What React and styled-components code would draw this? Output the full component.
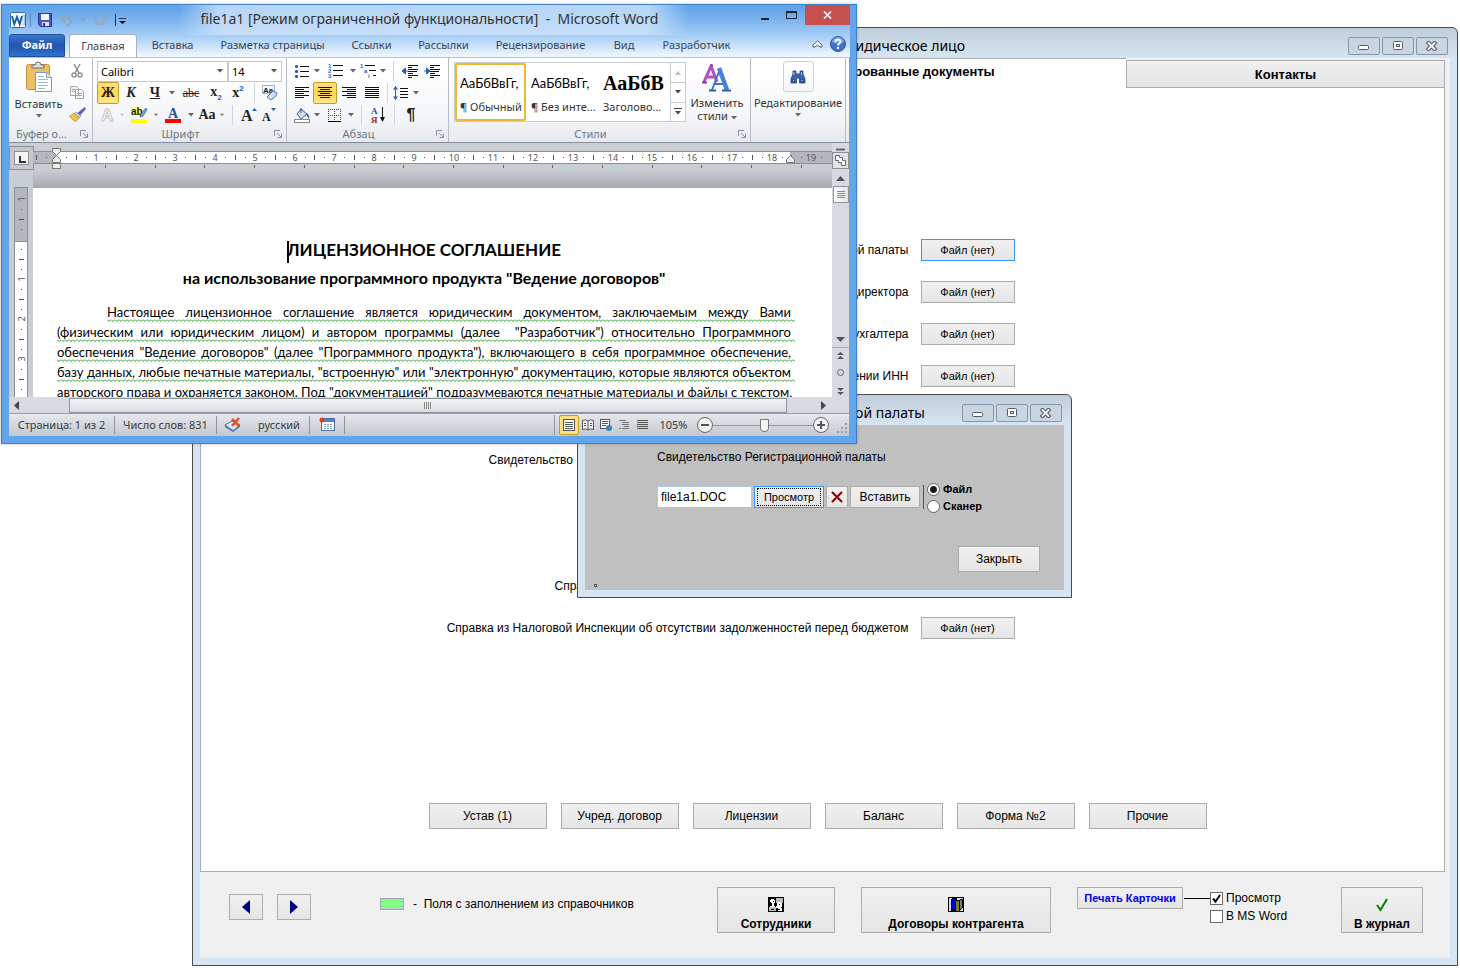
import React, { useState } from "react";
import styled, { createGlobalStyle, css } from "styled-components";

const SANS = `"Liberation Sans", Arial, sans-serif`;
const UI = `"Noto Sans", "Open Sans", sans-serif`;
const SERIF = `"Liberation Serif", "Times New Roman", serif`;
const DOC = `Lato, "Open Sans", sans-serif`;

const GlobalStyle = createGlobalStyle`
  * { box-sizing: border-box; }
  body { margin: 0; background: #fff; color: #000; font: 12px ${SANS}; }
  button, input, select { margin: 0; font: inherit; color: inherit; }
`;

/* ---------- desktop and MDI windows ---------- */

const Desktop = styled.div`
  position: relative;
  min-height: 100vh;
  overflow: hidden;
`;

const MdiWindow = styled.section`
  position: absolute;
  display: flex;
  flex-direction: column;
  padding: 0 7px 7px;
  border: 1px solid #4a4a4a;
  border-radius: 0 6px 0 0;
  background: linear-gradient(#c0cdda, #d7e4f2 30px);
`;

const MainFrame = styled(MdiWindow)`
  left: 192px;
  top: 27px;
  right: 2px;
  bottom: 3px;
`;

const DialogFrame = styled(MdiWindow)`
  left: 577px;
  top: 394px;
  width: 495px;
  height: 204px;
  border-radius: 6px 6px 0 0;
`;

const MdiTitle = styled.header`
  display: grid;
  grid-template-columns: ${(p) => p.$text}px 1fr;
  align-items: center;
  height: 30px;
  flex: none;
  padding-top: 5px;
  font: 14px ${UI};
  white-space: nowrap;

  h2 {
    margin: 0;
    font: inherit;
    text-align: right;
  }
`;

const MdiControls = styled.div`
  display: flex;
  justify-content: flex-end;
  gap: 2px;
  padding-right: 2px;
`;

const MdiButton = styled.button`
  display: flex;
  align-items: center;
  justify-content: center;
  width: 32px;
  height: 18px;
  padding: 0;
  border: 1px solid #8796aa;
  border-radius: 2px;
  background: #c8d5e3;
`;

const FormBody = styled.div`
  flex: 1;
  display: flex;
  flex-direction: column;
  background: #f0f0f0;
`;

/* ---------- contractor card ---------- */

const Tabs = styled.div`
  display: grid;
  grid-template-columns: 1fr 448px 319px;
  align-items: end;
  height: 30px;
  margin-right: 5px;
  background: linear-gradient(90deg, #fff calc(100% - 320px), #f0f0f0 0);
`;

const Tab = styled.button`
  height: 30px;
  grid-column: 2;
  padding: 0 0 4px 6px;
  border: 0;
  border-top: 1px solid #acacac;
  background: #fff;
  font: bold 13px ${SANS};

  ${(p) =>
    !p.$active &&
    css`
      grid-column: 3;
      height: 28px;
      padding: 0;
      border: 1px solid #acacac;
      background: linear-gradient(#f0f0f0, #e4e4e4);
    `}
`;

const Panel = styled.div`
  flex: 1;
  display: flex;
  flex-direction: column;
  justify-content: space-between;
  margin-right: 5px;
  padding: 141px 0 42px;
  border: 1px solid #acacac;
  border-top: 0;
  background: #fff;
`;

const FileRow = styled.div`
  display: grid;
  grid-template-columns: calc(57% - 1px) 94px;
  column-gap: 12px;
  align-items: center;
  height: 42px;
  white-space: nowrap;
`;

const FileLabel = styled.span`
  justify-self: end;
  width: ${(p) => (p.$width ? `${p.$width}px` : "auto")};
`;

const Button = styled.button`
  height: ${(p) => p.$height || 26}px;
  width: ${(p) => (p.$width ? `${p.$width}px` : "auto")};
  padding: 0;
  border: 1px solid ${(p) => (p.$focused ? "#3399ff" : "#acacac")};
  background: linear-gradient(#f0f0f0, #e5e5e5);
  font-size: ${(p) => p.$size || 12}px;
  white-space: nowrap;
`;

const Center = styled.span`
  display: flex;
  align-items: center;
  justify-content: center;
`;

const DocButtons = styled.div`
  display: flex;
  justify-content: center;
  gap: 14px;
  padding-right: 10px;
`;

const Footer = styled.footer`
  display: grid;
  grid-template-columns: 125px 1fr 118px 190px 238px 82px;
  column-gap: 26px;
  height: 86px;
  padding: 15px 27px 0 29px;
  white-space: nowrap;
`;

const NavButtons = styled.div`
  display: flex;
  gap: 14px;
  padding-top: 7px;
`;

const Legend = styled.div`
  display: flex;
  align-items: center;
  gap: 9px;
  height: 34px;

  i {
    width: 24px;
    height: 12px;
    border: 1px solid #a9a9c4;
    background: #80ff80;
    box-shadow: inset 0 0 0 1px #b0d0d0;
  }
`;

const TallButton = styled(Button)`
  display: flex;
  flex-direction: column;
  align-items: center;
  justify-content: flex-end;
  gap: 5px;
  height: 46px;
  padding-bottom: 1px;
  font-weight: bold;
`;

const PrintBox = styled.div`
  display: grid;
  grid-template-columns: 106px 27px auto;
  justify-content: start;
  align-items: start;

  ${Button} {
    color: #0000f0;
    font-weight: bold;
  }

  hr {
    width: 26px;
    margin: 11px 0 0 1px;
    border: 0;
    border-top: 1px solid #000;
  }
`;

const CheckList = styled.div`
  display: flex;
  flex-direction: column;
  gap: 2px;
  padding-top: 3px;
`;

const Check = styled.label`
  display: flex;
  align-items: center;
  gap: 3px;
  height: 16px;

  input {
    appearance: none;
    width: 13px;
    height: 13px;
    border: 1px solid #6a6a6a;
    background: #fff;
  }

  input:checked {
    background: #fff
      url("data:image/svg+xml,%3Csvg xmlns='http://www.w3.org/2000/svg' width='11' height='11'%3E%3Cpath d='M2 5.5l2.5 3L9 2' fill='none' stroke='%23000' stroke-width='2'/%3E%3C/svg%3E");
  }
`;

/* ---------- file dialog ---------- */

const DialogBody = styled(FormBody)`
  padding: 25px 24px 0 72px;
  background: #c0c0c0;
`;

const DialogControls = styled.div`
  display: flex;
  align-items: center;
  gap: 2px;
  height: 24px;
  margin-top: 21px;
`;

const FileInput = styled.input`
  width: 95px;
  height: 22px;
  padding: 0 3px;
  border: 1px solid #a8c8e8;
  background: #fff;
`;

const FocusRing = styled.span`
  display: flex;
  align-items: center;
  justify-content: center;
  height: 18px;
  margin: 1px 2px;
  border: 1px dotted #000;
`;

const Radios = styled.fieldset`
  display: flex;
  flex-direction: column;
  gap: 1px;
  height: 34px;
  margin: 2px 0 0;
  padding: 0 0 0 1px;
  border: 0;
  font-weight: bold;
  font-size: 11px;
`;

const Divider = styled.i`
  width: 1px;
  height: 24px;
  margin-left: 1px;
  background: #505050;
`;

const Radio = styled.label`
  display: flex;
  align-items: center;
  gap: 3px;
  height: 16px;

  input {
    appearance: none;
    width: 13px;
    height: 13px;
    border: 1px solid #606060;
    border-radius: 50%;
    background: #fff;
  }

  input:checked {
    background: radial-gradient(#1a1a1a 3px, #fff 4px);
  }
`;

const DialogFooter = styled.div`
  display: flex;
  justify-content: flex-end;
  margin-top: 37px;
`;

const Grip = styled.i`
  width: 3px;
  height: 3px;
  margin: 12px 0 0 -63px;
  border: 1px solid #505050;
  background: #fff;
`;

/* ---------- Word window ---------- */

const WordFrame = styled.section`
  position: absolute;
  left: 1px;
  top: 4px;
  width: 856px;
  height: 440px;
  display: flex;
  flex-direction: column;
  padding: 0 7px 7px;
  border: 1px solid #3f82c4;
  background: #62a5ea;
  color: #3b3b3b;
  font: 11px ${UI};
  box-shadow: 0 0 3px rgba(0, 0, 0, 0.25);
`;

const WordTop = styled.div`
  background: linear-gradient(90deg, transparent 170px, rgba(205, 226, 250, 0.8) 210px 640px, transparent 680px)
      0 0 / 100% 30px no-repeat,
    linear-gradient(#62a5ea 4px, #9cc8f5 28px, #f1f7fe 52px);
  margin-right: -1px;
`;

const TitleBar = styled.header`
  display: grid;
  grid-template-columns: 1fr auto 1fr;
  height: 29px;

  h1 {
    margin: 0;
    padding-top: 4px;
    font: 14px ${UI};
    white-space: pre;
    color: #333;
  }
`;

const QuickAccess = styled.div`
  display: flex;
  align-items: center;
  gap: 7px;
  padding-left: 1px;
`;

const PlainButton = styled.button`
  display: flex;
  align-items: center;
  justify-content: center;
  padding: 0;
  border: 0;
  background: none;
`;

const WordControls = styled.div`
  display: flex;
  justify-content: flex-end;
`;

const CloseButton = styled(PlainButton)`
  width: 45px;
  height: 20px;
  background: #c75050;
`;

const SystemButton = styled(PlainButton)`
  width: 27px;
  height: 20px;
`;

const RibbonTabs = styled.nav`
  display: flex;
  align-items: flex-end;
  height: 23px;
`;

const RibbonTab = styled.button`
  height: 23px;
  padding: 0 0 2px;
  width: ${(p) => p.$width}px;
  border: 0;
  background: none;
  color: #3b4350;
  white-space: nowrap;

  ${(p) =>
    p.$kind === "file" &&
    css`
      margin-right: 4px;
      border-radius: 3px 3px 0 0;
      border: 1px solid #1d4f9f;
      background: linear-gradient(#3a76cc, #2055ae 50%, #2f73d0);
      color: #fff;
      font-weight: bold;
    `}
  ${(p) =>
    p.$kind === "active" &&
    css`
      border: 1px solid #a3b3c6;
      border-bottom: 0;
      border-radius: 3px 3px 0 0;
      background: #fff;
    `}
`;

const TabsEnd = styled.div`
  display: flex;
  align-items: center;
  gap: 7px;
  height: 23px;
  margin-left: auto;
  padding: 0 4px 3px 0;
`;

const Ribbon = styled.div`
  display: flex;
  height: 86px;
  flex: none;
  border-top: 1px solid #b4c3d5;
  border-bottom: 1px solid #858f9c;
  background: linear-gradient(#fff 20%, #f3f5f8 70%, #e6e9ee);
`;

const Group = styled.div`
  display: flex;
  flex-direction: column;
  width: ${(p) => p.$width}px;
  padding: 1px 4px;
  border-right: 1px solid #b5bcc6;
`;

const GroupBody = styled.div`
  flex: 1;
  display: flex;
`;

const GroupLabel = styled.div`
  display: grid;
  grid-template-columns: 1fr 18px;
  align-items: center;
  height: 16px;
  color: #6d7682;
  text-align: center;
  white-space: nowrap;

  svg {
    justify-self: end;
  }
`;

const ToolRows = styled.div`
  flex: 1;
  padding-top: 1px;
`;

const ToolRow = styled.div`
  display: flex;
  align-items: center;
  height: 22px;
`;

const Tool = styled.button`
  display: flex;
  align-items: center;
  justify-content: center;
  flex: none;
  width: ${(p) => p.$w || 22}px;
  height: 22px;
  padding: 0;
  border: 1px solid ${(p) => (p.$active ? "#c29b29" : "transparent")};
  border-radius: 2px;
  background: ${(p) => (p.$active ? "linear-gradient(#fce08a, #ffd64f 50%, #ffe88c)" : "none")};
  color: #222;
  font: ${(p) => p.$font || `bold 14px ${SERIF}`};

  sub, sup {
    font: bold 8px/8px ${SANS};
    color: #2460c0;
  }
`;

const Sep = styled.i`
  width: ${(p) => p.$w || 10}px;
  height: 20px;
  background: linear-gradient(#d0d5dc, #d0d5dc) center / 1px 100% no-repeat;
`;

const BigButton = styled(PlainButton)`
  flex-direction: column;
  justify-content: flex-start;
  gap: 4px;
  width: ${(p) => p.$width}px;
  padding-top: ${(p) => p.$top || 2}px;
  line-height: 13px;
  color: #333;
`;

const SmallStack = styled.div`
  display: flex;
  flex-direction: column;
  padding-left: 2px;
`;

const Combo = styled.select`
  appearance: none;
  width: ${(p) => p.$width}px;
  height: 21px;
  padding: 0 3px;
  border: 1px solid #c3cad3;
  border-radius: 0;
  color: #000;
  background: #fff
    url("data:image/svg+xml,%3Csvg xmlns='http://www.w3.org/2000/svg' width='6' height='4'%3E%3Cpath d='M0 0h6L3 3.5z' fill='%23555'/%3E%3C/svg%3E")
    right 4px center no-repeat;
`;

const Gallery = styled.div`
  display: grid;
  grid-template-columns: 71px 72px 72px 15px;
  height: 60px;
  margin: 3px 2px 0 1px;
  border: 1px solid #c6ccd4;
  background: #fff;
`;

const StyleItem = styled.button`
  display: flex;
  flex-direction: column;
  justify-content: flex-end;
  gap: 6px;
  padding: 0 0 5px 3px;
  overflow: hidden;
  border: 2px solid ${(p) => (p.$active ? "#efb936" : "transparent")};
  border-radius: 2px;
  background: #fff;
  color: #333;
  text-align: left;
  white-space: nowrap;

  b {
    height: 20px;
    line-height: 20px;
    font: ${(p) => (p.$serif ? `bold 20px/20px ${SERIF}` : `13px/20px ${DOC}`)};
    color: #000;
  }
`;

const GalleryScroll = styled.div`
  display: grid;
  grid-template-rows: repeat(3, 1fr);
  border-left: 1px solid #c6ccd4;

  button + button {
    border-top: 1px solid #c6ccd4;
  }
`;

const FindBox = styled.span`
  display: flex;
  align-items: center;
  justify-content: center;
  width: 31px;
  height: 31px;
  border: 1px solid #cdd2d9;
  border-radius: 3px;
  background: linear-gradient(#fff, #f4f6f8);
`;

const Workspace = styled.div`
  flex: 1;
  display: grid;
  grid-template-columns: 24px 1fr 17px;
  grid-template-rows: 27px 18px 1fr 16px;
  background: #c9cdd4;
  min-height: 0;
`;

const RulerCorner = styled.button`
  width: 25px;
  height: 24px;
  margin-top: 3px;
  padding: 4px;
  border: 1px solid #8b8f96;
  background: #c4c8ce;

  svg {
    display: block;
    border: 1px solid #8b8f96;
    background: #f5f5f5;
  }
`;

const PageEdge = styled.div`
  grid-column: 2;
  background: linear-gradient(#c9cdd4, #a6a8ae);
`;

const LeftRuler = styled.div`
  grid-row: 2 / span 2;
  grid-column: 1;
  overflow: hidden;
  padding-top: 17px;
`;

const VScroll = styled.div`
  grid-column: 3;
  grid-row: 1 / span 4;
  display: flex;
  flex-direction: column;
  align-items: center;
  background: #d7dbe1;

  svg {
    display: block;
  }
`;

const VThumb = styled.span`
  width: 16px;
  height: 17px;
  border: 1px solid #8c929b;
  background: linear-gradient(90deg, #fff, #dfe3e8);
`;

const Sheet = styled.article`
  grid-column: 2;
  grid-row: 3;
  overflow: hidden;
  padding: 51px 41px 0 24px;
  background: #fff;
  color: #000;
  font: 13px ${DOC};

  h3 {
    margin: 0;
    text-align: center;
    font: bold 17px/22px ${DOC};
  }

  h4 {
    margin: 4px 0 13px;
    text-align: center;
    font: bold 16px/22px ${DOC};
  }
`;

const Caret = styled.i`
  display: inline-block;
  width: 2px;
  height: 22px;
  margin-right: -2px;
  vertical-align: middle;
  background: #000;
`;

const wave = css`
  background: url("data:image/svg+xml,%3Csvg xmlns='http://www.w3.org/2000/svg' width='4' height='3'%3E%3Cpath d='M0 .5l2 2 2-2' fill='none' stroke='%2322a022'/%3E%3C/svg%3E")
    0 100% / 4px 3px repeat-x;
`;

const Line = styled.div`
  height: 20px;
  line-height: 20px;
  margin: 0 -4px 0 ${(p) => p.$indent || 0}px;
  padding-right: 4px;
  text-align: justify;
  text-align-last: justify;
  white-space: nowrap;
  ${(p) => !p.$plain && wave}
`;

const Checked = styled.span`
  padding-bottom: 1px;
  ${wave}
`;

const HScroll = styled.div`
  grid-column: 1 / span 2;
  grid-row: 4;
  display: flex;
  align-items: center;
  justify-content: space-between;
  padding: 0 5px;
  background: #d7dbe1;
`;

const HThumb = styled.span`
  display: flex;
  align-items: center;
  justify-content: center;
  flex: 1;
  height: 15px;
  margin: 0 34px 0 49px;
  border: 1px solid #8c929b;
  background: linear-gradient(#f3f5f7, #d9dde3);
`;

const StatusBar = styled.footer`
  display: flex;
  align-items: center;
  height: 23px;
  flex: none;
  border-top: 1px solid #9aa0a8;
  background: linear-gradient(#e5e8ec, #c3c8d0);
  white-space: nowrap;
`;

const StatusCell = styled.span`
  display: flex;
  align-items: center;
  justify-content: center;
  width: ${(p) => p.$width}px;
  height: 18px;
  padding-bottom: 2px;
  border-right: 1px solid ${(p) => (p.$open ? "transparent" : "#8f959e")};
`;

const StatusEnd = styled.div`
  display: flex;
  align-items: center;
  margin-left: auto;
  padding-left: 4px;
  border-left: 1px solid #8f959e;
`;

const ViewButton = styled(PlainButton)`
  width: ${(p) => (p.$active ? 20 : 18)}px;
  height: 20px;
  ${(p) =>
    p.$active &&
    css`
      border: 1px solid #c29b29;
      border-radius: 2px;
      background: #ffe184;
    `}
`;

const ZoomSlider = styled.input`
  appearance: none;
  width: 100px;
  height: 14px;
  background: linear-gradient(#8c96a3, #8c96a3) center / 100% 1px no-repeat;

  &::-webkit-slider-thumb {
    appearance: none;
    width: 9px;
    height: 13px;
    border: 1px solid #777;
    border-radius: 0 0 4px 4px;
    background: #f5f5f5;
  }
`;

/* ---------- small drawings ---------- */

const Arrow = ({ fill = "#666", up }) => (
  <svg width="6" height="4" viewBox="0 0 6 4">
    <path d={up ? "M0 4h6L3 0z" : "M0 0h6L3 3.5z"} fill={fill} />
  </svg>
);

const DropTool = ({ w = 8, fill }) => (
  <Tool $w={w} aria-label="Ещё">
    <Arrow fill={fill} />
  </Tool>
);

const Launcher = () => (
  <svg width="9" height="9" fill="none" stroke="#8a919c">
    <path d="M1.5 7V1.5H7M4 4l4 4M8.500 4.500v4h-4" />
  </svg>
);

const Lines = ({ rows, x = 0, color = "#111" }) => (
  <g fill={color}>
    {rows.map(([l, w], i) => (
      <rect key={i} x={x + l} y={i * 2} width={w} height="1" />
    ))}
  </g>
);

const ALIGN = {
  left: [[0, 14], [0, 9], [0, 14], [0, 9], [0, 14], [0, 9]],
  center: [[0, 14], [2, 10], [0, 14], [2, 10], [0, 14], [2, 10]],
  right: [[0, 14], [5, 9], [0, 14], [5, 9], [0, 14], [5, 9]],
  full: [[0, 14], [0, 14], [0, 14], [0, 14], [0, 14], [0, 14]],
};

const AlignIcon = ({ kind }) => (
  <svg width="14" height="12">
    <Lines rows={ALIGN[kind]} />
  </svg>
);

const MdiIcons = () => (
  <MdiControls>
    <MdiButton aria-label="Свернуть">
      <svg width="12" height="10" fill="#fff" stroke="#555b66">
        <rect x=".5" y="4.500" width="10" height="4" rx="1" />
      </svg>
    </MdiButton>
    <MdiButton aria-label="Развернуть">
      <svg width="11" height="9" fill="#fff" stroke="#555b66">
        <rect x=".5" y=".5" width="9" height="8" rx="1" />
        <rect x="3.500" y="3.500" width="3" height="2" />
      </svg>
    </MdiButton>
    <MdiButton aria-label="Закрыть окно">
      <svg width="12" height="10" strokeLinecap="square">
        <path d="M2.500 2l6 6M8.500 2l-6 6" stroke="#555b66" strokeWidth="4" />
        <path d="M2.500 2l6 6M8.500 2l-6 6" stroke="#fff" strokeWidth="1.800" />
      </svg>
    </MdiButton>
  </MdiControls>
);

const WordLogo = () => (
  <svg width="21" height="16">
    <rect x=".5" y=".5" width="15" height="15" rx="1" fill="#fff" stroke="#2b6cb8" />
    <path d="M12 3h2.500v10H12" fill="#dbe8f7" stroke="#8fb0d8" strokeWidth=".7" />
    <path d="M2 4l2.300 8L7 5l2.700 7L12 4" fill="none" stroke="#1d5fb0" strokeWidth="2" />
    <path d="M20.500 1v14" stroke="#5f87b5" />
  </svg>
);

const SaveIcon = () => (
  <svg width="14" height="14">
    <path d="M.5.500h13v13h-11l-2-2z" fill="#4a56c8" stroke="#2d3590" />
    <rect x="3" y="1" width="8" height="6" fill="#f4f6ff" />
    <rect x="4" y="9" width="7" height="4" fill="#dfe2ee" />
    <rect x="5" y="10" width="2" height="3" fill="#2d3590" />
  </svg>
);

const UndoIcon = () => (
  <svg width="14" height="14" fill="none" stroke="#93a6bd" strokeWidth="2.500">
    <path d="M2 5h6c5 0 5 5 0 8" />
    <path d="M6 1L2 5l4 4" strokeWidth="2" />
  </svg>
);

const RedoIcon = () => (
  <svg width="13" height="13" fill="none" stroke="#98a9bd" strokeWidth="2.500">
    <path d="M3 4a4.500 4.500 0 1 0 7-1" />
    <path d="M11 6V2H7" strokeWidth="1.500" />
  </svg>
);

const HelpIcon = () => (
  <svg width="16" height="16">
    <circle cx="8" cy="8" r="7.500" fill="#3f72cc" stroke="#2c56a5" />
    <path d="M2 6a6 5 0 0 1 12 0q-6 3-12 0" fill="#7da4e6" />
    <path d="M5.500 6c0-3 5-3 5-.3C10.500 7.500 8 7.500 8 9.500" fill="none" stroke="#fff" strokeWidth="1.800" />
    <circle cx="8" cy="12" r="1.200" fill="#fff" />
  </svg>
);

const PasteIcon = () => (
  <svg width="28" height="32">
    <rect x="1.500" y="3.500" width="23" height="25" rx="2" fill="#eebf62" stroke="#c08f3a" />
    <path d="M7 7V4h3q0-3 3-3t3 3h3v3z" fill="#d9dce0" stroke="#6b6f76" />
    <path d="M10.500 11.500h11l5 5v14h-16z" fill="#fff" stroke="#7f98bb" />
    <path d="M21.500 11.500v5h5" fill="#dce8f6" stroke="#7f98bb" />
    <path d="M13 15.500h6M13 18.500h10M13 21.500h10M13 24.500h10M13 27.500h7" stroke="#9bb6da" />
  </svg>
);

const CutIcon = () => (
  <svg width="12" height="15" fill="none" stroke="#909090">
    <path d="M3 1l5 9M9 1L4 10" strokeWidth="1.500" />
    <circle cx="3" cy="12" r="2" strokeWidth="1.500" />
    <circle cx="9" cy="12" r="2" strokeWidth="1.500" />
  </svg>
);

const CopyIcon = () => (
  <svg width="16" height="14" fill="#f5f5f5" stroke="#a5a5a5">
    <path d="M1.500 1.500h6l2 2v7h-8zM6.500 4.500h6l2 2v7h-8z" />
    <path d="M3 4.500h3M3 6.500h3M8 8.500h5M8 10.500h5" />
  </svg>
);

const BrushIcon = () => (
  <svg width="17" height="15">
    <path d="M15.500.500L9 6l2 2 5.500-6z" fill="#5a6bb5" stroke="#39457f" strokeWidth=".6" />
    <path d="M7 5l5 4-2 2-5-4z" fill="#c9cfd8" stroke="#777" strokeWidth=".6" />
    <path d="M5 6l5 5-3 3.500Q4 14 .5 9z" fill="#f0c44a" stroke="#a98422" strokeWidth=".6" />
  </svg>
);

const EraserIcon = () => (
  <svg width="16" height="16">
    <rect x=".5" y=".5" width="12" height="8" fill="#f4f8fd" stroke="#9bb4d8" />
    <text x="1" y="8" fontSize="8" fontFamily="Liberation Sans" fill="#222">Aa</text>
    <path d="M5 12l6-6 4 2-1 3-5 4z" fill="#cfe0f6" stroke="#4d78b5" />
  </svg>
);

const PenMark = () => (
  <svg width="17" height="16">
    <rect y="0" width="10" height="9" fill="#ffff66" />
    <text x="0" y="8" fontSize="10" fontFamily="Liberation Sans" fill="#222">ab</text>
    <path d="M15 1L10 7l-1 3 3-1 4-6z" fill="#7ea5dc" stroke="#3d62a3" strokeWidth=".8" />
    <rect y="12" width="16" height="4" fill="#ffff00" />
  </svg>
);

const ColorA = () => (
  <svg width="16" height="16">
    <text x="3" y="11" fontSize="14" fontWeight="bold" fontFamily="Liberation Serif" fill="#2a4f9a">A</text>
    <rect y="12" width="16" height="4" fill="#f00" />
  </svg>
);

const SizeA = ({ up }) => (
  <svg width="16" height="16">
    <text x="0" y="14" fontSize={up ? 16 : 12} fontWeight="bold" fontFamily="Liberation Serif" fill="#222">A</text>
    <path d={up ? "M11 4h5l-2.500-3z" : "M9 1h5l-2.500 3z"} fill="#2c5fb8" />
  </svg>
);

const BulletsIcon = () => (
  <svg width="14" height="13">
    {[0, 5, 10].map((y) => (
      <g key={y}>
        <rect y={y} width="3" height="3" rx="1" fill="#2a5cc0" />
        <rect x="5" y={y + 1} width="9" height="1" fill="#111" />
      </g>
    ))}
  </svg>
);

const NumbersIcon = () => (
  <svg width="15" height="14">
    {[0, 5, 10].map((y, i) => (
      <g key={y}>
        <text x="0" y={y + 4} fontSize="6" fontWeight="bold" fontFamily="Liberation Sans" fill="#2a5cc0">{i + 1}</text>
        <rect x="5" y={y + 1} width="10" height="1" fill="#111" />
      </g>
    ))}
  </svg>
);

const LevelsIcon = () => (
  <svg width="16" height="15">
    {["1", "a", "i"].map((t, i) => (
      <g key={t}>
        <text x={i * 4} y={i * 5 + 4} fontSize="6" fontWeight="bold" fontFamily="Liberation Sans" fill="#2a5cc0">{t}</text>
        <rect x={i * 4 + 5} y={i * 5 + 1} width={i === 2 ? 3 : 10 - i * 3} height="1" fill="#111" />
      </g>
    ))}
  </svg>
);

const IndentIcon = ({ right }) => (
  <svg width="16" height="13">
    <Lines rows={[[6, 10], [6, 4], [6, 10], [6, 9], [6, 5], [6, 10], [6, 4]]} />
    <path d="M7.500 0v13" stroke="#111" strokeDasharray="1 1" />
    <path d={right ? "M0 6h3M2.500 3L6 6 2.500 9z" : "M6 6H3M3.500 3L0 6l3.500 3z"} fill="#2a5cc0" stroke="#2a5cc0" />
  </svg>
);

const SpacingIcon = () => (
  <svg width="16" height="16">
    <path d="M2.500 1v14" stroke="#2a5cc0" />
    <path d="M0 4.500h5L2.500 1zM0 11.500h5L2.500 15z" fill="#2a5cc0" />
    <path d="M7 3.500h8M7 6.500h8M7 9.500h8M7 12.500h8" stroke="#111" />
  </svg>
);

const BucketIcon = () => (
  <svg width="16" height="16">
    <path d="M7 2l6 5-6 5-4-5z" fill="#cfe0f5" stroke="#37598f" />
    <path d="M7 6V1" stroke="#37598f" />
    <path d="M12 6q4 1 3 6l-2-3z" fill="#3469bd" />
    <rect x=".5" y="12.500" width="15" height="3" fill="#fff" stroke="#888" />
  </svg>
);

const BordersIcon = () => (
  <svg width="13" height="13" stroke="#444" fill="none">
    <path d="M.5 0v12M6.500 0v12M12.500 0v12M0 .5h13M0 6.500h13" strokeDasharray="1 1" />
    <path d="M0 12.500h13" stroke="#000" />
  </svg>
);

const SortIcon = () => (
  <svg width="15" height="16">
    <text x="0" y="7" fontSize="9" fontWeight="bold" fontFamily="Liberation Serif" fill="#2a4f9a">А</text>
    <text x="0" y="16" fontSize="9" fontWeight="bold" fontFamily="Liberation Serif" fill="#9c2a2a">Я</text>
    <path d="M11.500 0v12" stroke="#111" />
    <path d="M9 10h5l-2.500 5z" fill="#111" />
  </svg>
);

/* two overlapping serif capitals */
const StylesIcon = () => (
  <svg width="30" height="28" fill="none">
    <path d="M2 18L9 2l6 16M5 13h8" stroke="#b44fc0" strokeWidth="3" />
    <path d="M0 18.500h5M9 1.500h2" stroke="#8c2f9c" strokeWidth="2" />
    <path d="M10 26l8-21M13 20h10" stroke="#3f74cc" strokeWidth="2" />
    <path d="M17 4l8 22" stroke="#4b82d8" strokeWidth="4.500" />
    <path d="M7 26.500h7M20 26.500h9" stroke="#2f5ca8" strokeWidth="2" />
  </svg>
);

const BinocularsIcon = () => (
  <svg width="16" height="14" fill="#3c62ad" stroke="#1f3c78" strokeWidth=".8">
    <path d="M3 1h3v3h4V1h3v3l2 5v4H9.500V8h-3v5H1V9l2-5z" />
    <path d="M2.500 9.500h2v2h-2zM11 9.500h2v2h-2z" fill="#c5d6f2" />
    <path d="M4 2v3M11.500 2v3" stroke="#c5d6f2" />
  </svg>
);

const PeopleIcon = () => (
  <svg width="16" height="15" shapeRendering="crispEdges">
    <rect width="16" height="15" />
    <rect x="1" y="10" width="7" height="4" fill="#bbb" />
    <rect x="8" y="1" width="7" height="5" fill="#bbb" />
    <path d="M3 2h3v1h1v3H6v3h1v1H2V9h2V6H3V5H2V3h1z" fill="#fff" />
    <path d="M9 5h4v1h1v4h-1v1h1v3h-4v-3H8V9h1z" fill="#fff" />
    <path d="M5 4h1v1H5zM11 7h1v1h-1zM10 12h2v1h-2zM3 12h3v1H3z" />
  </svg>
);

const BooksIcon = () => (
  <svg width="16" height="15" shapeRendering="crispEdges">
    <rect width="16" height="15" />
    <rect x="1" y="1" width="14" height="13" fill="#ddd" />
    <path d="M3 3l2-2h3v12H3z" fill="#0000e0" stroke="#000" />
    <path d="M7 5l2-2h2v11H7z" fill="#808000" stroke="#000" />
    <path d="M11 4l2-2h1v9l-3 3z" fill="#777" stroke="#000" />
  </svg>
);

const ProofIcon = () => (
  <svg width="18" height="15">
    <path d="M1 8l7-4 8 4-7 6z" fill="#dbe7f6" stroke="#4c71aa" />
    <path d="M1 9l8 5 7-5" fill="none" stroke="#4c71aa" strokeWidth="1.500" />
    <path d="M8 2l7 7M15 1L8 9" stroke="#e8502f" strokeWidth="2.500" />
  </svg>
);

const MacroIcon = () => (
  <svg width="16" height="14">
    <rect x="2.500" y="1.500" width="13" height="12" fill="#fff" stroke="#4c71aa" />
    <rect x="3" y="2" width="12" height="3" fill="#4c80d0" />
    <path d="M5 7.500h9M5 9.500h9M5 11.500h9" stroke="#7e9ccc" strokeDasharray="2 1" />
    <circle cx="3" cy="3" r="2.500" fill="#d8402c" />
  </svg>
);

const VIEW_ICONS = [
  <g key="p"><rect x=".5" y=".5" width="11" height="11" fill="#fff" stroke="#555" /><path d="M2 3.500h8M2 5.500h8M2 7.500h8M2 9.500h8" stroke="#555" /></g>,
  <path key="r" d="M6 2v9M.5 1.500Q4 0 6 2q2-2 5.500-.5v9Q8 9 6 11 4 9 .5 10.500zM2 4.500h2M2 6.500h2M8 4.500h2M8 6.500h2" fill="#eee" stroke="#555" />,
  <g key="w"><rect x=".5" y=".5" width="9" height="9" fill="#fff" stroke="#555" /><path d="M2 2.500h6M2 4.500h6M2 6.500h4" stroke="#555" /><circle cx="9" cy="9" r="3" fill="#3b84b5" /></g>,
  <path key="s" d="M1 1.500h7M4 3.500h7M4 5.500h7M6 7.500h5M1 9.500h2M4 9.500h7" stroke="#777" />,
  <path key="d" d="M1 1.500h11M1 3.500h11M1 5.500h11M1 7.500h11M1 9.500h11" stroke="#555" />,
];

const ZoomSign = ({ plus }) => (
  <svg width="16" height="16">
    <circle cx="8" cy="8" r="7.500" fill="#f2f2f2" stroke="#666" />
    <path d={plus ? "M4 8h8M8 4v8" : "M4 8h8"} stroke="#555" strokeWidth="2" />
  </svg>
);

const HRuler = () => (
  <svg width="100%" height="27">
    <rect y="9" width="100%" height="12" fill="#b4b8be" />
    <rect x="23" y="9" width="734" height="12" fill="#fff" />
    <path d="M0 8.500h799M0 20.500h799" stroke="#8b8f96" />
    {[...Array(20)].map((_, i) => {
      const x = 23 + Math.round(i * 39.75);
      return (
        <g key={i} fill="#555">
          {i > 0 && (
            <text x={x} y="18" fontSize="9" textAnchor="middle" fontFamily="Noto Sans">{i}</text>
          )}
          <rect x={x - 10} y="14" width="1" height="1" />
          <rect x={x + 10} y="14" width="1" height="1" />
          <rect x={x - 20} y="12" width="1" height="5" />
        </g>
      );
    })}
    {[...Array(15)].map((_, i) => (
      <rect key={i} x={72 + Math.round(i * 49.7)} y="22" width="1" height="3" fill="#666" />
    ))}
    <g fill="#eee" stroke="#777">
      <path d="M19.500 5.500h8v3l-4 4-4-4zM19.500 19.500v-3l4-4 4 4v3zM19.500 20.500h8v5h-8z" />
      <path d="M753.500 19.500v-3l4-4 4 4v3z" />
    </g>
  </svg>
);

const VRuler = () => (
  <svg width="24" height="210">
    <rect x="5.500" y=".5" width="13" height="220" fill="#fff" stroke="#8b8f96" />
    <rect x="5.500" y=".5" width="13" height="54" fill="#b4b8be" stroke="#8b8f96" />
    {[-1, 0, 1, 2, 3, 4].map((i) => {
      const y = 53 + i * 40;
      return (
        <g key={i} fill="#555">
          {i !== 0 && i !== 4 && (
            <text x="0" y="0" fontSize="9" textAnchor="middle" fontFamily="Noto Sans" transform={`translate(16 ${y - 1}) rotate(-90)`}>
              {Math.abs(i)}
            </text>
          )}
          <rect x="12" y={y + 9} width="1" height="1" />
          <rect x="10" y={y + 19} width="5" height="1" />
          <rect x="12" y={y + 29} width="1" height="1" />
        </g>
      );
    })}
  </svg>
);

const VScrollIcons = () => (
  <svg width="17" height="68">
    <path d="M4 6h9l-4.500 5z" fill="#555" />
    <path d="M0 16.500h17" stroke="#a8adb5" />
    <path d="M5 24h7l-3.500-3zM5 28h7l-3.500-3z" fill="#555" />
    <circle cx="8.500" cy="41.500" r="3" fill="none" stroke="#666" />
    <path d="M5 57h7l-3.500 3zM5 61h7l-3.500 3z" fill="#555" />
  </svg>
);

/* ---------- data ---------- */

const FILE_ROWS = [
  { label: "Регистрационной палаты", focused: true },
  { label: "директора" },
  { label: "бухгалтера" },
  { label: "присвоении ИНН" },
  {},
  { label: "Свидетельство", width: 420, covered: true },
  {},
  {},
  { label: "Справка", width: 354, covered: true },
  { label: "Справка из Налоговой Инспекции об отсутствии задолженностей перед бюджетом" },
];

const DOC_BUTTONS = ["Устав (1)", "Учред. договор", "Лицензии", "Баланс", "Форма №2", "Прочие"];

const RIBBON_TABS = [
  ["Файл", 56, "file"],
  ["Главная", 68, "active"],
  ["Вставка", 71],
  ["Разметка страницы", 129],
  ["Ссылки", 69],
  ["Рассылки", 75],
  ["Рецензирование", 119],
  ["Вид", 48],
  ["Разработчик", 97],
];

/* ---------- windows ---------- */

function ContractorCard() {
  const [preview, setPreview] = useState(true);
  const [word, setWord] = useState(false);

  return (
    <MainFrame>
      <MdiTitle $text={765}>
        <h2>Юридическое лицо</h2>
        <MdiIcons />
      </MdiTitle>
      <FormBody>
        <Tabs>
          <Tab $active>Сканированные документы</Tab>
          <Tab>Контакты</Tab>
        </Tabs>
        <Panel>
          <div>
            {FILE_ROWS.map((row, idx) => (
              <FileRow key={idx}>
                <FileLabel $width={row.width}>{row.label}</FileLabel>
                {row.label && !row.covered && (
                  <Button $height={22} $size={11} $focused={row.focused}>
                    Файл (нет)
                  </Button>
                )}
              </FileRow>
            ))}
          </div>
          <DocButtons>
            {DOC_BUTTONS.map((text) => (
              <Button key={text} $width={118}>
                {text}
              </Button>
            ))}
          </DocButtons>
        </Panel>
        <Footer>
          <NavButtons>
            <Button $width={34} aria-label="Назад">
              <Center>
                <svg width="8" height="14">
                  <path d="M8 0v14L0 7z" fill="#000080" />
                </svg>
              </Center>
            </Button>
            <Button $width={34} aria-label="Вперёд">
              <Center>
                <svg width="8" height="14">
                  <path d="M0 0v14l8-7z" fill="#000080" />
                </svg>
              </Center>
            </Button>
          </NavButtons>
          <Legend>
            <i />
            <span>-&nbsp; Поля с заполнением из справочников</span>
          </Legend>
          <TallButton>
            <PeopleIcon />
            Сотрудники
          </TallButton>
          <TallButton>
            <BooksIcon />
            Договоры контрагента
          </TallButton>
          <PrintBox>
            <Button $height={22} $size={11}>
              Печать Карточки
            </Button>
            <hr />
            <CheckList>
              <Check>
                <input type="checkbox" checked={preview} onChange={() => setPreview(!preview)} />
                Просмотр
              </Check>
              <Check>
                <input type="checkbox" checked={word} onChange={() => setWord(!word)} />В MS Word
              </Check>
            </CheckList>
          </PrintBox>
          <TallButton>
            <svg width="12" height="14">
              <path d="M1 7l3.500 5L11 1" fill="none" stroke="#008000" strokeWidth="2" />
            </svg>
            В журнал
          </TallButton>
        </Footer>
      </FormBody>
    </MainFrame>
  );
}

function FileDialog() {
  const [source, setSource] = useState("file");

  return (
    <DialogFrame>
      <MdiTitle $text={340}>
        <h2>Регистрационной палаты</h2>
        <MdiIcons />
      </MdiTitle>
      <DialogBody>
        <label htmlFor="fileName">Свидетельство Регистрационной палаты</label>
        <DialogControls>
          <FileInput id="fileName" defaultValue="file1a1.DOC" />
          <Button $width={70} $height={22} $size={11} $focused>
            <FocusRing>Просмотр</FocusRing>
          </Button>
          <Button $width={22} $height={22} aria-label="Удалить">
            <Center>
              <svg width="12" height="12">
                <path d="M1 1l10 10M11 1L1 11" stroke="#8b0000" strokeWidth="2" />
              </svg>
            </Center>
          </Button>
          <Button $width={70} $height={22}>
            Вставить
          </Button>
          <Divider />
          <Radios>
            <Radio>
              <input type="radio" name="source" checked={source === "file"} onChange={() => setSource("file")} />
              Файл
            </Radio>
            <Radio>
              <input type="radio" name="source" checked={source === "scan"} onChange={() => setSource("scan")} />
              Сканер
            </Radio>
          </Radios>
        </DialogControls>
        <DialogFooter>
          <Button $width={82}>Закрыть</Button>
        </DialogFooter>
        <Grip />
      </DialogBody>
    </DialogFrame>
  );
}

function FontGroup() {
  return (
    <Group $width={194}>
      <GroupBody>
        <ToolRows>
          <ToolRow>
            <Combo $width={131} aria-label="Шрифт">
              <option>Calibri</option>
            </Combo>
            <Combo $width={54} aria-label="Размер шрифта">
              <option>14</option>
            </Combo>
          </ToolRow>
          <ToolRow>
            <Tool $active>Ж</Tool>
            <Tool $w={24} $font={`italic bold 14px ${SERIF}`}>К</Tool>
            <Tool $w={24}><u>Ч</u></Tool>
            <DropTool w={10} />
            <Tool $w={28} $font={`12px ${SERIF}`}><s>abc</s></Tool>
            <Tool><span>x<sub>2</sub></span></Tool>
            <Tool><span>x<sup>2</sup></span></Tool>
            <Sep />
            <Tool aria-label="Очистить формат"><EraserIcon /></Tool>
          </ToolRow>
          <ToolRow>
            <Tool aria-label="Текстовые эффекты">
              <svg width="16" height="16">
                <text x="1" y="14" fontSize="17" fontWeight="bold" fontFamily="Liberation Sans" fill="#fff" stroke="#c5c5c9">A</text>
              </svg>
            </Tool>
            <DropTool w={6} fill="#bbb" />
            <Tool $w={28} aria-label="Цвет выделения"><PenMark /></Tool>
            <DropTool w={6} />
            <Tool $w={28} aria-label="Цвет текста"><ColorA /></Tool>
            <DropTool w={8} />
            <Tool $w={24}>Aa</Tool>
            <DropTool w={6} />
            <Sep $w={14} />
            <Tool $w={20} aria-label="Увеличить шрифт"><SizeA up /></Tool>
            <Tool aria-label="Уменьшить шрифт"><SizeA /></Tool>
          </ToolRow>
        </ToolRows>
      </GroupBody>
      <GroupLabel>
        Шрифт
        <Launcher />
      </GroupLabel>
    </Group>
  );
}

function ParagraphGroup() {
  return (
    <Group $width={162}>
      <GroupBody>
        <ToolRows>
          <ToolRow>
            <Tool aria-label="Маркеры"><BulletsIcon /></Tool>
            <DropTool />
            <Tool $w={28} aria-label="Нумерация"><NumbersIcon /></Tool>
            <DropTool />
            <Tool aria-label="Многоуровневый список"><LevelsIcon /></Tool>
            <DropTool />
            <Sep $w={12} />
            <Tool aria-label="Уменьшить отступ"><IndentIcon /></Tool>
            <Tool aria-label="Увеличить отступ"><IndentIcon right /></Tool>
          </ToolRow>
          <ToolRow>
            <Tool aria-label="По левому краю"><AlignIcon kind="left" /></Tool>
            <Tool $w={24} $active aria-label="По центру"><AlignIcon kind="center" /></Tool>
            <Tool $w={24} aria-label="По правому краю"><AlignIcon kind="right" /></Tool>
            <Tool aria-label="По ширине"><AlignIcon kind="full" /></Tool>
            <Sep $w={8} />
            <Tool $w={20} aria-label="Интервал"><SpacingIcon /></Tool>
            <DropTool w={10} />
          </ToolRow>
          <ToolRow>
            <Tool aria-label="Заливка"><BucketIcon /></Tool>
            <DropTool />
            <Tool $w={26} aria-label="Границы"><BordersIcon /></Tool>
            <DropTool />
            <Sep $w={12} />
            <Tool aria-label="Сортировка"><SortIcon /></Tool>
            <Sep />
            <Tool $w={24} $font={`bold 16px ${SANS}`}>¶</Tool>
          </ToolRow>
        </ToolRows>
      </GroupBody>
      <GroupLabel>
        Абзац
        <Launcher />
      </GroupLabel>
    </Group>
  );
}

function WordRibbon() {
  return (
    <Ribbon>
      <Group $width={84}>
        <GroupBody>
          <BigButton $width={52}>
            <PasteIcon />
            Вставить
            <Arrow />
          </BigButton>
          <SmallStack>
            <Tool aria-label="Вырезать"><CutIcon /></Tool>
            <Tool aria-label="Копировать"><CopyIcon /></Tool>
            <Tool aria-label="Формат по образцу"><BrushIcon /></Tool>
          </SmallStack>
        </GroupBody>
        <GroupLabel>
          Буфер о...
          <Launcher />
        </GroupLabel>
      </Group>
      <FontGroup />
      <ParagraphGroup />
      <Group $width={302}>
        <GroupBody>
          <Gallery>
            <StyleItem $active>
              <b>АаБбВвГг,</b>
              ¶ Обычный
            </StyleItem>
            <StyleItem>
              <b>АаБбВвГг,</b>
              ¶ Без инте...
            </StyleItem>
            <StyleItem $serif>
              <b>АаБбВ</b>
              Заголово...
            </StyleItem>
            <GalleryScroll>
              <PlainButton aria-label="Вверх"><Arrow up fill="#bbb" /></PlainButton>
              <PlainButton aria-label="Вниз"><Arrow fill="#444" /></PlainButton>
              <PlainButton aria-label="Все стили">
                <svg width="8" height="7" fill="#444"><path d="M0 0h8v1H0zM1 3h6L4 6.500z" /></svg>
              </PlainButton>
            </GalleryScroll>
          </Gallery>
          <BigButton $width={58} $top={5}>
            <StylesIcon />
            <span>
              Изменить
              <br />
              стили <Arrow />
            </span>
          </BigButton>
        </GroupBody>
        <GroupLabel>
          Стили
          <Launcher />
        </GroupLabel>
      </Group>
      <Group $width={95}>
        <BigButton $width={86}>
          <FindBox><BinocularsIcon /></FindBox>
          Редактирование
          <Arrow />
        </BigButton>
      </Group>
    </Ribbon>
  );
}

function WordDocument() {
  return (
    <Workspace>
      <RulerCorner aria-label="Табуляция">
        <svg width="15" height="14"><path d="M5 4v6h6" fill="none" stroke="#333" strokeWidth="2" /></svg>
      </RulerCorner>
      <HRuler />
      <PageEdge />
      <LeftRuler><VRuler /></LeftRuler>
      <Sheet>
        <h3><Caret />ЛИЦЕНЗИОННОЕ СОГЛАШЕНИЕ</h3>
        <h4>на использование программного продукта "Ведение договоров"</h4>
        <Line $indent={50}>Настоящее лицензионное соглашение является юридическим документом, заключаемым между Вами</Line>
        <Line>(физическим или юридическим лицом) и автором программы (далее &nbsp;"Разработчик") относительно Программного</Line>
        <Line>обеспечения "Ведение договоров" (далее "Программного продукта"), включающего в себя программное обеспечение,</Line>
        <Line>базу данных, любые печатные материалы, "встроенную" или "электронную" документацию, которые являются объектом</Line>
        <Line $plain>
          <Checked>авторского права и охраняется законом.</Checked> Под "документацией" подразумеваются печатные материалы и файлы с текстом,
        </Line>
      </Sheet>
      <VScroll>
        <svg width="17" height="43">
          <path d="M4 6.500h9" stroke="#666" strokeWidth="2" />
          <rect x=".5" y="9.500" width="16" height="16" fill="#dfe2e7" stroke="#8b8f96" />
          <path d="M3.500 12.500h4v2h3v3h3v5h-4v-3h-3v-2h-3z" fill="#fff" stroke="#666" />
          <path d="M4 38h9l-4.500-5z" fill="#555" />
        </svg>
        <VThumb>
          <svg width="14" height="15"><path d="M3 4.500h8M3 6.500h8M3 8.500h8M3 10.500h8" stroke="#888" /></svg>
        </VThumb>
        <Center style={{ flex: 1 }} />
        <VScrollIcons />
        <svg width="17" height="14" />
      </VScroll>
      <HScroll>
        <svg width="6" height="9"><path d="M5 0v9L0 4.500z" fill="#444" /></svg>
        <HThumb><svg width="8" height="7"><path d="M.5 0v7M2.500 0v7M4.500 0v7M6.500 0v7" stroke="#888" /></svg></HThumb>
        <svg width="6" height="9"><path d="M0 0v9l5-4.500z" fill="#444" /></svg>
      </HScroll>
    </Workspace>
  );
}

function WordWindow() {
  const [zoom, setZoom] = useState(52);

  return (
    <WordFrame>
      <WordTop>
        <TitleBar>
          <QuickAccess>
            <WordLogo />
            <PlainButton aria-label="Сохранить"><SaveIcon /></PlainButton>
            <PlainButton aria-label="Отменить"><UndoIcon /></PlainButton>
            <Arrow fill="#8ba3c0" />
            <PlainButton aria-label="Повторить"><RedoIcon /></PlainButton>
            <svg width="14" height="14">
              <path d="M2.500 1v12M6 5.500h7" stroke="#333" />
              <path d="M6 8h7l-3.500 3z" fill="#111" />
            </svg>
          </QuickAccess>
          <h1>{"file1a1 [Режим ограниченной функциональности]  -  Microsoft Word"}</h1>
          <WordControls>
            <SystemButton aria-label="Свернуть">
              <svg width="8" height="12"><path d="M0 10h8" stroke="#222" strokeWidth="2" /></svg>
            </SystemButton>
            <SystemButton aria-label="Развернуть">
              <svg width="11" height="8"><path d="M.5 1h10v6.500H.5z" fill="none" stroke="#222" /><path d="M0 1h11" stroke="#222" strokeWidth="2" /></svg>
            </SystemButton>
            <CloseButton aria-label="Закрыть Word">
              <svg width="9" height="8"><path d="M1 .5l7 7M8 .5l-7 7" stroke="#fff" strokeWidth="1.600" /></svg>
            </CloseButton>
          </WordControls>
        </TitleBar>
        <RibbonTabs>
          {RIBBON_TABS.map(([text, width, kind]) => (
            <RibbonTab key={text} $width={width} $kind={kind}>
              {text}
            </RibbonTab>
          ))}
          <TabsEnd>
            <svg width="11" height="8"><path d="M1 5l4.500-4L10 5v2H8L5.500 5 3 7H1z" fill="#fff" stroke="#555" /></svg>
            <HelpIcon />
          </TabsEnd>
        </RibbonTabs>
      </WordTop>
      <WordRibbon />
      <WordDocument />
      <StatusBar>
        <StatusCell $width={106}>Страница: 1 из 2</StatusCell>
        <StatusCell $width={102}>Число слов: 831</StatusCell>
        <StatusCell $width={32} $open><ProofIcon /></StatusCell>
        <StatusCell $width={61}>русский</StatusCell>
        <StatusCell $width={35}><MacroIcon /></StatusCell>
        <StatusEnd>
          {VIEW_ICONS.map((icon, idx) => (
            <ViewButton key={idx} $active={idx === 0} aria-label={`Режим ${idx + 1}`}>
              <svg width="12" height="12">{icon}</svg>
            </ViewButton>
          ))}
          <StatusCell $width={46} $open>105%</StatusCell>
          <PlainButton aria-label="Уменьшить"><ZoomSign /></PlainButton>
          <ZoomSlider type="range" min="0" max="100" aria-label="Масштаб" value={zoom} onChange={(e) => setZoom(Number(e.target.value))} />
          <PlainButton aria-label="Увеличить"><ZoomSign plus /></PlainButton>
          <svg width="20" height="20" fill="#9aa0a8">
            <path d="M16 8h2v2h-2zM12 12h2v2h-2zM16 12h2v2h-2zM8 16h2v2H8zM12 16h2v2h-2zM16 16h2v2h-2z" />
          </svg>
        </StatusEnd>
      </StatusBar>
    </WordFrame>
  );
}

function App() {
  return (
    <>
      <GlobalStyle />
      <Desktop>
        <ContractorCard />
        <FileDialog />
        <WordWindow />
      </Desktop>
    </>
  );
}

export default App;
